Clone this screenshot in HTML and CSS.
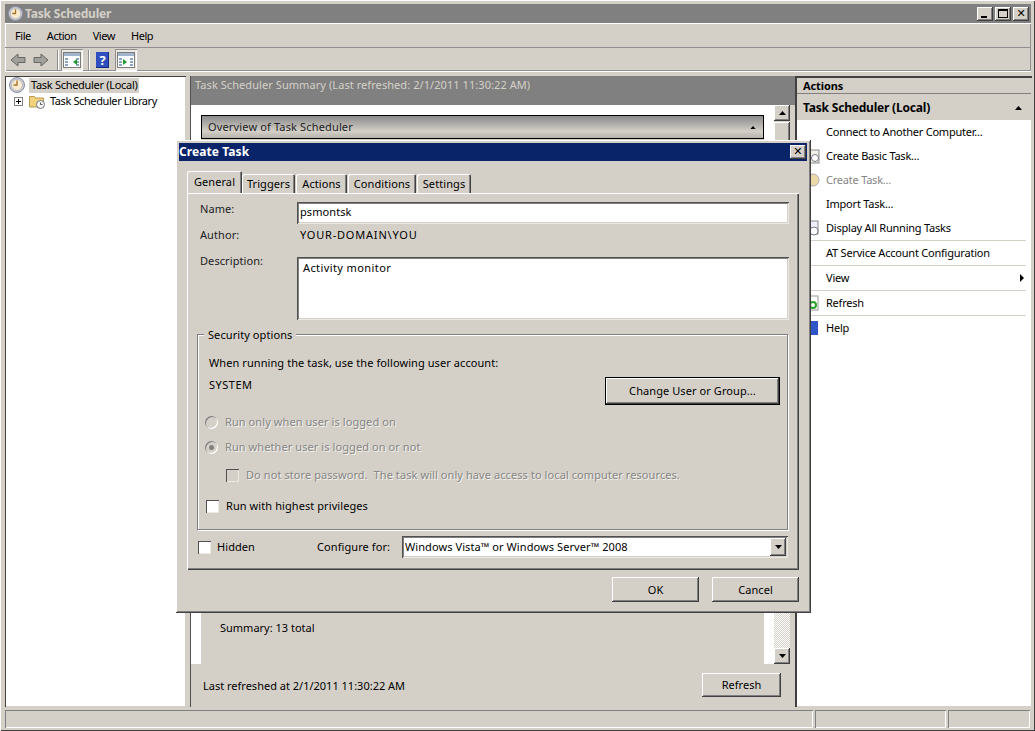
FILE: index.html
```html
<!DOCTYPE html>
<html lang="en">
<head>
<meta charset="utf-8">
<title>Task Scheduler</title>
<link rel="stylesheet" href="styles.css">
</head>
<body>
<svg class="defs" width="0" height="0">
  <symbol id="clock" viewBox="0 0 16 16">
    <circle cx="8" cy="8" r="7.500" fill="#c9ccd8" stroke="#8b8e9e"/>
    <circle cx="8" cy="8" r="5.500" fill="#f7ecd0" stroke="#a3a6b4" stroke-width=".6"/>
    <path d="M8 3.500v4.500h-3.500" fill="none" stroke="#a8742a" stroke-width="1.400"/>
  </symbol>
  <symbol id="up" viewBox="0 0 7 4"><path d="M3.500 0L7 4H0z" fill="#000"/></symbol>
  <symbol id="down" viewBox="0 0 7 4"><path d="M0 0h7L3.500 4z" fill="#000"/></symbol>
  <symbol id="arrow" viewBox="0 0 16 14">
    <path d="M1 7l7-6v3.500h7v5H8V13z" fill="#a0a09c" stroke="#666662"/>
  </symbol>
  <symbol id="pane" viewBox="0 0 18 16">
    <rect x=".5" y=".5" width="17" height="15" fill="#fff" stroke="#7c7c7c"/>
    <rect x="1" y="1" width="16" height="3" fill="#9fb4cc"/>
    <path d="M2 6h3v2H2zM2 9h3v2H2zM2 12h3v2H2zM13 6h3v2h-3zM13 9h3v2h-3zM13 12h3v2h-3z" fill="#8aa5c4"/>
  </symbol>
</svg>

<div class="window">
  <header class="titlebar">
    <svg class="ico-title"><use href="#clock"/></svg>
    <span class="title-text">Task Scheduler</span>
    <div class="winbtns">
      <button class="winbtn"><span class="glyph-min"></span></button>
      <button class="winbtn"><span class="glyph-max"></span></button>
      <button class="winbtn glyph-x">✕</button>
    </div>
  </header>

  <nav class="menubar">
    <span class="menu m1">File</span>
    <span class="menu m2">Action</span>
    <span class="menu m3">View</span>
    <span class="menu m4">Help</span>
  </nav>

  <div class="toolbar">
    <svg class="tool-arrow"><use href="#arrow"/></svg>
    <svg class="tool-arrow flip"><use href="#arrow"/></svg>
    <span class="tool-sep"></span>
    <span class="tool-toggle first">
      <svg class="pane-ico"><use href="#pane"/></svg>
      <span class="pane-tri left"></span>
    </span>
    <span class="tool-sep"></span>
    <span class="help-ico">?</span>
    <span class="tool-toggle">
      <svg class="pane-ico"><use href="#pane"/></svg>
      <span class="pane-tri right"></span>
    </span>
  </div>

  <main class="main">
    <section class="tree">
      <div class="tree-row">
        <svg class="ico-tree"><use href="#clock"/></svg>
        <span class="tree-sel">Task Scheduler (Local)</span>
      </div>
      <div class="tree-row child">
        <span class="plus"></span>
        <svg class="ico-folder" viewBox="0 0 16 16">
          <path d="M.5 3.500h5l1 1.500h8v9H.5z" fill="#f2d27c" stroke="#b59a4f"/>
          <circle cx="11.500" cy="11.500" r="4" fill="#f6f6f2" stroke="#6f7488"/>
          <path d="M11.500 9.500v2h2" fill="none" stroke="#555"/>
        </svg>
        <span class="tree-label">Task Scheduler Library</span>
      </div>
    </section>

    <section class="center">
      <div class="center-head">Task Scheduler Summary (Last refreshed: 2/1/2011 11:30:22 AM)</div>
      <div class="center-scroll">
        <div class="center-white">
          <div class="overview">
            <span>Overview of Task Scheduler</span>
            <svg class="tri small"><use href="#up"/></svg>
          </div>
          <div class="summary-area">
            <span class="summary">Summary: 13 total</span>
          </div>
        </div>
        <div class="scrollbar">
          <span class="sb-btn"><svg class="tri"><use href="#up"/></svg></span>
          <span class="sb-thumb"></span>
          <span class="sb-track"></span>
          <span class="sb-btn"><svg class="tri"><use href="#down"/></svg></span>
        </div>
      </div>
      <div class="center-foot">
        <span>Last refreshed at 2/1/2011 11:30:22 AM</span>
        <button class="btn refresh">Refresh</button>
      </div>
    </section>

    <aside class="actions">
      <div class="actions-head">Actions</div>
      <div class="actions-sub">
        <span>Task Scheduler (Local)</span>
        <svg class="tri"><use href="#up"/></svg>
      </div>
      <ul class="action-list">
        <li class="action"><span class="a-ico"></span>Connect to Another Computer...</li>
        <li class="action"><span class="a-ico"><svg class="a-svg" viewBox="0 0 16 16"><rect x="1" y="2" width="14" height="13" fill="#f2efe6" stroke="#8a8a8a"/><circle cx="11" cy="10" r="3.500" fill="#fff" stroke="#77798a"/></svg></span>Create Basic Task...</li>
        <li class="action off"><span class="a-ico"><svg class="a-svg" viewBox="0 0 16 16"><circle cx="9" cy="8" r="6" fill="#ecd9a8" stroke="#aaa"/></svg></span>Create Task...</li>
        <li class="action"><span class="a-ico"></span>Import Task...</li>
        <li class="action"><span class="a-ico"><svg class="a-svg" viewBox="0 0 16 16"><rect x="3" y="1" width="11" height="13" fill="#eef" stroke="#888"/><circle cx="10" cy="11" r="4" fill="#fff" stroke="#77798a"/></svg></span>Display All Running Tasks</li>
        <li class="rule"></li>
        <li class="action"><span class="a-ico"></span>AT Service Account Configuration</li>
        <li class="rule"></li>
        <li class="action"><span class="a-ico"></span>View<span class="submenu"></span></li>
        <li class="rule"></li>
        <li class="action"><span class="a-ico"><svg class="a-svg" viewBox="0 0 16 16"><rect x="2" y="1" width="12" height="14" fill="#fff" stroke="#999"/><circle cx="9" cy="10" r="3" fill="none" stroke="#28a428" stroke-width="2"/></svg></span>Refresh</li>
        <li class="rule"></li>
        <li class="action"><span class="a-ico"><svg class="a-svg" viewBox="0 0 16 16"><rect x="2" y="1" width="12" height="14" fill="#2f55c8"/></svg></span>Help</li>
      </ul>
    </aside>
  </main>

  <footer class="statusbar">
    <span class="cell c1"></span>
    <span class="cell c2"></span>
    <span class="cell c3"></span>
  </footer>
</div>

<div class="dialog">
  <div class="dlg-title">
    <span>Create Task</span>
    <button class="winbtn glyph-x">✕</button>
  </div>
  <div class="dlg-body">
    <div class="tabs">
      <span class="tab active">General</span>
      <span class="tab t2">Triggers</span>
      <span class="tab t3">Actions</span>
      <span class="tab t4">Conditions</span>
      <span class="tab t5">Settings</span>
    </div>
    <div class="panel">
      <div class="form-row name-row">
        <label class="lbl">Name:</label>
        <div class="field">psmontsk</div>
      </div>
      <div class="form-row author-row">
        <span class="lbl">Author:</span>
        <span class="value">YOUR-DOMAIN\YOU</span>
      </div>
      <div class="form-row desc-row">
        <label class="lbl">Description:</label>
        <div class="field area">Activity monitor</div>
      </div>

      <div class="group">
        <span class="legend">Security options</span>
        <div class="when">When running the task, use the following user account:</div>
        <div class="user-row">
          <span class="sys">SYSTEM</span>
          <button class="btn change">Change User or Group...</button>
        </div>
        <div class="opt r1 off"><span class="radio"></span>Run only when user is logged on</div>
        <div class="opt r2 off"><span class="radio checked"></span>Run whether user is logged on or not</div>
        <div class="opt r3 off"><span class="check dim"></span>Do not store password.&nbsp; The task will only have access to local computer resources.</div>
        <div class="opt r4"><span class="check"></span>Run with highest privileges</div>
      </div>

      <div class="bottom-row">
        <div class="opt hidden-opt"><span class="check"></span>Hidden</div>
        <span class="cfg-label">Configure for:</span>
        <div class="select">
          <span class="select-text">Windows Vista™ or Windows Server™ 2008</span>
          <span class="sb-btn drop"><svg class="tri"><use href="#down"/></svg></span>
        </div>
      </div>
    </div>
    <div class="dlg-foot">
      <button class="btn dlg-btn">OK</button>
      <button class="btn dlg-btn">Cancel</button>
    </div>
  </div>
</div>
</body>
</html>
```

FILE: styles.css
```css
* { box-sizing: border-box; }
html, body { margin: 0; padding: 0; }
body {
  width: 1035px; height: 731px; overflow: hidden; position: relative;
  background: #d4d0c8; color: #000;
  font-family: "Noto Sans", "Liberation Sans", sans-serif;
  font-size: 11px; line-height: 16px;
}
.defs { position: absolute; }
button { font: inherit; letter-spacing: inherit; color: #000; margin: 0; padding: 0; border: 0; background: #d4d0c8; }

.window {
  width: 1035px; height: 731px; display: flex; flex-direction: column;
  padding: 4px 3px 3px 5px;
  box-shadow: inset 1px 1px #fff, inset -1px -1px #404040;
}

.titlebar {
  flex: none; height: 19px; margin-right: 1px; background: #808080; color: #d4d0c8;
  display: flex; align-items: center; padding: 0 2px 0 3px;
}
.ico-title { width: 15px; height: 15px; }
.title-text { font-weight: 700; font-size: 12px; letter-spacing: -.2px; margin-left: 2px; flex: 1; }
.winbtns { display: flex; gap: 2px; }
.winbtn {
  width: 16px; height: 14px; display: flex; align-items: center; justify-content: center;
  box-shadow: inset -1px -1px #404040, inset 1px 1px #fff, inset -2px -2px #808080;
}
.glyph-min { width: 6px; height: 2px; background: #000; margin-top: 6px; margin-left: -2px; }
.glyph-max { width: 10px; height: 9px; border: 1px solid #000; border-top-width: 2px; }
.glyph-x { font-size: 11px; line-height: 14px; font-weight: 700; font-family: "DejaVu Sans", sans-serif; }

.menubar {
  flex: none; height: 25px; margin-right: 1px; display: flex; align-items: center; letter-spacing: -.45px;
  box-shadow: inset 0 1px #fff, inset 0 -1px #8f8f8f, inset -1px 0 #8f8f8f, inset 1px 0 #fff;
}
.menu { display: block; }
.m1 { margin-left: 10px; }
.m2 { margin-left: 16px; }
.m3 { margin-left: 16px; }
.m4 { margin-left: 16px; }

.toolbar {
  flex: none; height: 24px; margin-right: 1px; display: flex; align-items: center; padding-left: 5px;
  box-shadow: inset 0 -1px #fff, inset -1px 0 #8f8f8f, inset 1px 0 #fff, inset 0 -2px #8f8f8f;
}
.tool-arrow { width: 16px; height: 14px; margin-right: 7px; }
.flip { transform: scaleX(-1); }
.tool-sep { width: 2px; height: 20px; margin: 0 2px 0 1px; background: #8f8f8f; border-right: 1px solid #fff; }
.tool-toggle {
  position: relative; width: 22px; height: 22px; display: flex; align-items: center; justify-content: center;
  background: #ece9e2; box-shadow: inset 1px 1px #8f8f8f, inset -1px -1px #fff;
}
.first { margin-right: 4px; }
.pane-ico { width: 18px; height: 16px; }
.pane-tri { position: absolute; top: 10px; border: 3px solid transparent; }
.pane-tri.left { left: 12px; border-right: 4px solid #1f9a2e; border-left: 0; }
.pane-tri.right { left: 8px; border-left: 4px solid #1f9a2e; border-right: 0; }
.help-ico {
  width: 13px; height: 16px; margin: 0 6px 0 4px; display: flex; align-items: center; justify-content: center;
  background: #2f4fc0; color: #fff; font-weight: 700; font-size: 13px;
  box-shadow: inset -1px -1px #162a7c;
}

.main { flex: 1; display: flex; margin-top: 4px; min-height: 0; }

.tree {
  flex: none; width: 181px; background: #fff; padding: 1px 0 0 4px; letter-spacing: -.4px;
  box-shadow: inset 1px 1px #404040, inset -1px -1px #d4d0c8;
}
.tree-row { display: flex; align-items: center; height: 16px; }
.ico-tree { width: 16px; height: 16px; }
.tree-sel { margin-left: 4px; padding: 0 2px; background: #d4d0c8; height: 15px; line-height: 13px; letter-spacing: -.3px; }
.child { padding-left: 5px; }
.plus {
  width: 9px; height: 9px; border: 1px solid #808080; background: #fff;
  background-image: linear-gradient(#000, #000), linear-gradient(#000, #000);
  background-size: 5px 1px, 1px 5px; background-repeat: no-repeat; background-position: center;
}
.ico-folder { width: 16px; height: 16px; margin-left: 6px; }
.tree-label { margin-left: 5px; }

.center {
  flex: none; width: 605px; margin-left: 4px; display: flex; flex-direction: column;
  border-left: 1px solid #505050;
}
.center-head { flex: none; height: 29px; padding: 1px 0 0 4px; background: #808080; color: #d4d0c8; letter-spacing: .07px; }
.center-scroll { flex: none; height: 559px; display: flex; margin-right: 5px; }
.center-white { flex: 1; background: #fff; padding: 10px 10px 0 10px; display: flex; flex-direction: column; }
.overview {
  flex: none; height: 24px; display: flex; align-items: center; justify-content: space-between;
  padding: 0 7px 0 6px; border: 1px solid #000; letter-spacing: .15px;
  background: linear-gradient(#8a8a8a, #d4d0c8 70%, #b4b1aa);
  color: #222;
}
.tri { width: 7px; height: 4px; display: block; }
.small { width: 6px; height: 3px; }
.summary-area { flex: 1; background: #d4d0c8; display: flex; align-items: flex-end; padding: 0 0 28px 19px; }
.scrollbar { flex: none; width: 16px; display: flex; flex-direction: column; }
.sb-btn {
  flex: none; width: 16px; height: 16px; display: flex; align-items: center; justify-content: center; background: #d4d0c8;
  box-shadow: inset -1px -1px #404040, inset 1px 1px #fff, inset -2px -2px #808080;
}
.sb-thumb {
  flex: none; height: 470px; margin-top: 1px; background: #d4d0c8;
  box-shadow: inset -1px -1px #404040, inset 1px 1px #fff, inset -2px -2px #808080;
}
.sb-track {
  flex: 1;
  background: conic-gradient(#d4d0c8 25%, #fff 0 50%, #d4d0c8 0 75%, #fff 0) 0 0 / 2px 2px;
}
.center-foot { flex: 1; display: flex; align-items: flex-start; justify-content: space-between; background: #d4d0c8; padding: 9px 14px 0 12px; }
.center-foot span { margin-top: 5px; }
.btn {
  display: block; text-align: center;
  box-shadow: inset -1px -1px #404040, inset 1px 1px #fff, inset -2px -2px #808080;
}
.refresh { width: 79px; height: 24px; }

.actions {
  flex: 1; background: #fff; display: flex; flex-direction: column; min-width: 0;
  box-shadow: inset 2px 0 #404040, inset 0 2px #404040, inset -1px -1px #d4d0c8;
}
.actions-head {
  flex: none; height: 16px; margin: 2px 1px 0 2px; padding: 0 0 0 6px; background: #d4d0c8;
  font-weight: 700; border-bottom: 1px solid #808080; letter-spacing: -.1px; line-height: 16px;
}
.actions-sub {
  flex: none; height: 26px; margin: 0 1px 0 2px; padding: 1px 9px 0 6px; background: #d4d0c8;
  font-weight: 700; font-size: 12px; letter-spacing: -.2px; display: flex; align-items: center; justify-content: space-between;
}
.action-list { list-style: none; margin: 0; padding: 0 6px 0 0; letter-spacing: -.22px; }
.action { height: 24px; display: flex; align-items: center; position: relative; }
.a-ico { width: 31px; height: 16px; padding-left: 9px; flex: none; }
.a-svg { width: 16px; height: 16px; display: block; }
.off { color: #868686; }
.rule { height: 1px; margin-left: 14px; background: #d4d0c8; }
.submenu { position: absolute; right: 2px; top: 8px; border: 4px solid transparent; border-left: 4px solid #000; border-right: 0; }

.statusbar { flex: none; height: 18px; margin-top: 3px; display: flex; gap: 2px; }
.cell { display: block; box-shadow: inset 1px 1px #808080, inset -1px -1px #fff; }
.c1 { width: 808px; }
.c2 { width: 131px; }
.c3 { width: 82px; }

.dialog {
  position: absolute; left: 176px; top: 140px; width: 635px; height: 473px;
  padding: 3px 4px 3px 3px; background: #d4d0c8; letter-spacing: .08px;
  box-shadow: inset -1px -1px #404040, inset 1px 1px #fff, inset -2px -2px #808080;
}
.dlg-title {
  height: 18px; background: #0a246a; color: #fff; font-weight: 700; font-size: 12px;
  display: flex; align-items: center; justify-content: space-between; padding: 0 1px 0 0;
}
.dlg-body { padding: 10px 8px 0 8px; }
.tabs { display: flex; height: 22px; align-items: flex-end; position: relative; z-index: 1; }
.tab {
  display: block; height: 19px; line-height: 20px; text-align: center; background: #d4d0c8; margin-right: 1px;
  box-shadow: inset 1px 1px #fff, inset -1px 0 #404040, inset -2px 0 #808080;
  border-radius: 2px 2px 0 0;
}
.active { width: 55px; height: 22px; line-height: 21px; margin-right: 0; }
.t2 { width: 53px; }
.t3 { width: 51px; }
.t4 { width: 68px; }
.t5 { width: 54px; }

.panel {
  height: 377px; padding: 9px 10px 0 13px;
  box-shadow: inset 1px 1px #fff, inset -1px -1px #404040, inset -2px -2px #808080;
}
.form-row { display: flex; }
.lbl { flex: none; width: 97px; color: #222; }
.name-row { height: 22px; }
.name-row .lbl { margin-top: -1px; }
.field {
  flex: none; width: 492px; height: 22px; background: #fff; padding: 2px 0 0 3px;
  box-shadow: inset 1px 1px #505050, inset -1px -1px #ece9e2, inset 2px 2px #808080, inset -2px -2px #d4d0c8;
}
.author-row { height: 22px; padding-top: 3px; }
.value { padding-left: 3px; letter-spacing: .8px; }
.desc-row { margin-top: 11px; height: 63px; }
.desc-row .lbl { margin-top: -4px; }
.area { height: 63px; padding: 3px 0 0 6px; letter-spacing: .4px; }

.group {
  position: relative; width: 591px; height: 196px; margin: 14px 0 0 -3px; padding: 20px 7px 0 11px;
  border: 1px solid #808080; box-shadow: 1px 1px #fff, inset 1px 1px #fff;
}
.legend { position: absolute; left: 6px; top: -8px; padding: 0 4px; background: #d4d0c8; }
.user-row { display: flex; justify-content: space-between; align-items: flex-start; margin-top: 6px; height: 28px; }
.sys { letter-spacing: .5px; }
.change {
  width: 175px; height: 28px;
  box-shadow: 0 0 0 1px #000 inset, inset -2px -2px #404040, inset 2px 2px #fff, inset -3px -3px #808080;
}
.opt { display: flex; align-items: center; height: 16px; }
.opt.off { text-shadow: 1px 1px 0 #f4f2ec; }
.radio {
  flex: none; width: 13px; height: 13px; border-radius: 50%; background: #d4d0c8; position: relative;
  box-shadow: inset 1px 1px #808080, inset -1px -1px #fff;
}
.checked::after {
  content: ""; position: absolute; left: 4px; top: 4px; width: 5px; height: 5px; border-radius: 50%; background: #808080;
}
.check {
  flex: none; width: 13px; height: 13px; background: #fff; display: block;
  box-shadow: inset 1px 1px #505050, inset -1px -1px #ece9e2;
}
.dim { background: #d4d0c8; }
.r1 { margin: 9px 0 0 -4px; }
.r1 .radio, .r2 .radio { margin-right: 7px; }
.r2 { margin: 9px 0 0 -4px; }
.r3 { margin: 12px 0 0 17px; }
.r3 .check { margin-right: 7px; }
.r4 { margin: 15px 0 0 -3px; }
.r4 .check { margin-right: 7px; }

.bottom-row { display: flex; align-items: center; height: 22px; margin: 6px 0 0 -2px; }
.hidden-opt { width: 119px; }
.hidden-opt .check { margin-right: 6px; }
.cfg-label { width: 85px; flex: none; }
.select {
  width: 386px; height: 22px; background: #fff; display: flex; align-items: center; justify-content: space-between; padding: 0 2px 0 3px;
  box-shadow: inset 1px 1px #505050, inset -1px -1px #ece9e2, inset 2px 2px #808080, inset -2px -2px #d4d0c8;
}
.drop { height: 18px; }

.dlg-foot { display: flex; justify-content: flex-end; gap: 13px; margin-top: 7px; }
.dlg-btn { width: 87px; height: 25px; }
```
